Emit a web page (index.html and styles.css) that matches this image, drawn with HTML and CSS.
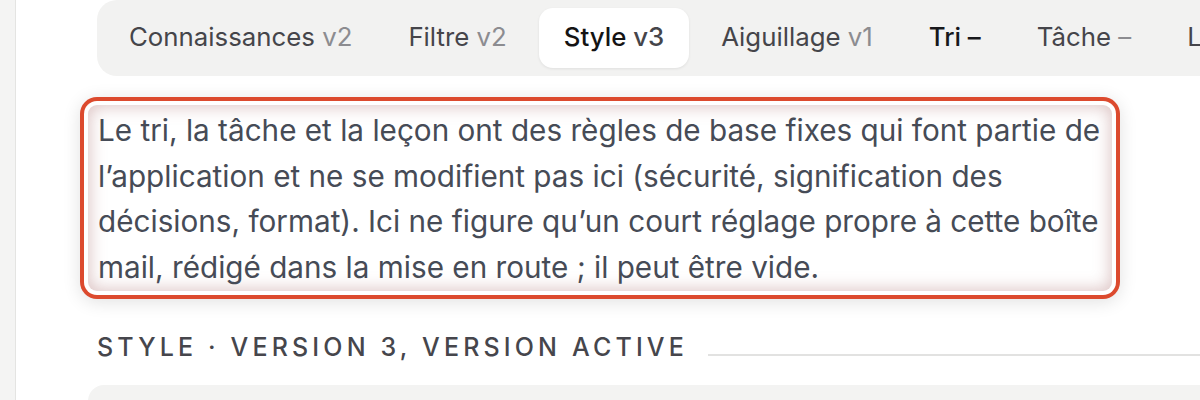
FILE: index.html
```html
<!DOCTYPE html>
<html lang="fr">
<head>
<meta charset="utf-8">
<title>Style v3</title>
<link rel="stylesheet" href="styles.css">
</head>
<body>
  <aside class="rail"></aside>
  <main class="main">
    <nav class="tabs">
      <span class="tab">Connaissances <span class="ver">v2</span></span>
      <span class="tab">Filtre <span class="ver">v2</span></span>
      <span class="tab tab-active">Style <span class="ver">v3</span></span>
      <span class="tab">Aiguillage <span class="ver">v1</span></span>
      <span class="tab tab-hover">Tri <span class="ver">–</span></span>
      <span class="tab">Tâche <span class="ver">–</span></span>
      <span class="tab">Leçon <span class="ver">–</span></span>
    </nav>
    <div class="editor">Le tri, la tâche et la leçon ont des règles de base fixes qui font partie de l’application et ne se modifient pas ici (sécurité, signification des décisions, format). Ici ne figure qu’un court réglage propre à cette boîte mail, rédigé dans la mise en route ; il peut être vide.</div>
    <div class="section-head">
      <h2 class="section-title">Style · Version 3, version active</h2>
      <span class="rule"></span>
    </div>
    <div class="panel"></div>
  </main>
</body>
</html>
```
FILE: styles.css
```css
html, body {
  margin: 0;
  height: 100%;
}
body {
  display: flex;
  background: #ffffff;
  font-family: Inter, "Noto Sans", "Liberation Sans", sans-serif;
  overflow: hidden;
}
.rail {
  width: 15px;
  flex: none;
  background: #f4f4f3;
  border-right: 1px solid #e4e4e2;
}
.main {
  flex: 1;
  min-width: 0;
  padding-left: 72px;
  overflow: hidden;
}
.tabs {
  display: flex;
  gap: 8px;
  width: max-content;
  margin-left: 9px;
  padding: 8px 8px 8px;
  background: #f2f2f1;
  border-radius: 20px;
  white-space: nowrap;
}
.tab {
  display: flex;
  align-items: center;
  height: 60px;
  padding: 0 24px 3px;
  box-sizing: border-box;
  border-radius: 14px;
  font-size: 25.8px;
  font-weight: 400;
  color: #45454a;
  white-space: pre;
}
.ver {
  color: #8c8c90;
}
.tab-active {
  padding: 0 25px 3px;
  background: #ffffff;
  color: #141414;
  font-weight: 500;
  box-shadow: 0 1px 3px rgba(0, 0, 0, 0.08);
}
.tab-active .ver {
  color: #45454a;
}
.tab-hover,
.tab-hover .ver {
  color: #18181b;
  font-weight: 500;
}
.editor {
  width: 1024px;
  box-sizing: border-box;
  margin-top: 29px;
  padding: 3px 4px 1px 10px;
  border-radius: 9px;
  background: #ffffff;
  font-size: 29.7px;
  line-height: 45.5px;
  color: #464b56;
  box-shadow:
    inset 0 0 16px 2px rgba(160, 95, 95, 0.36),
    0 0 0 4px #ffffff,
    0 0 0 8px #dc4a2e,
    0 3px 18px 8px rgba(0, 0, 0, 0.12);
}
.section-head {
  display: flex;
  align-items: flex-end;
  gap: 20px;
  margin-top: 41px;
  margin-left: 9px;
}
.section-title {
  margin: 0;
  font-size: 25px;
  line-height: 31px;
  font-weight: 500;
  letter-spacing: 0.166em;
  text-transform: uppercase;
  color: #46464c;
  white-space: nowrap;
}
.rule {
  flex: 1;
  height: 2px;
  margin-bottom: 7px;
  background: #e2e2e1;
}
.panel {
  margin-top: 22px;
  height: 80px;
  background: #f3f3f2;
  border-radius: 16px 0 0 0;
}
```
